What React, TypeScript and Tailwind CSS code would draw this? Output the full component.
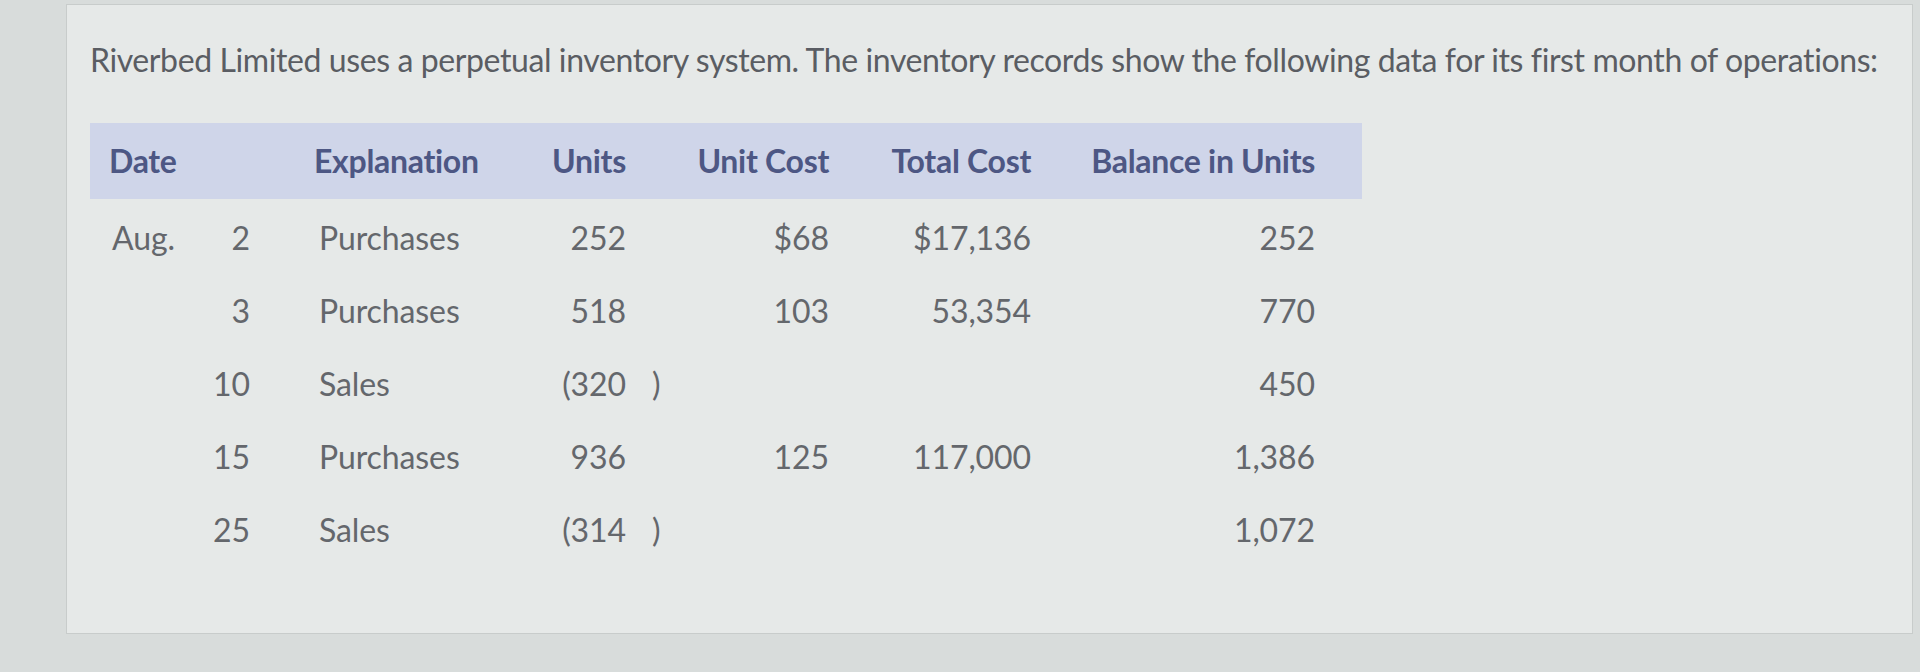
const rows = [
  { month: 'Aug.', day: '2', exp: 'Purchases', units: '252', neg: false, unitCost: '$68', total: '$17,136', balance: '252' },
  { month: '', day: '3', exp: 'Purchases', units: '518', neg: false, unitCost: '103', total: '53,354', balance: '770' },
  { month: '', day: '10', exp: 'Sales', units: '(320', neg: true, unitCost: '', total: '', balance: '450' },
  { month: '', day: '15', exp: 'Purchases', units: '936', neg: false, unitCost: '125', total: '117,000', balance: '1,386' },
  { month: '', day: '25', exp: 'Sales', units: '(314', neg: true, unitCost: '', total: '', balance: '1,072' },
]

const cols = 'grid grid-cols-[205px_215px_97px_203px_202px_284px]'

export default function App() {
  return (
    <div className="h-[672px] w-[1920px] overflow-hidden bg-[#d8dcdb] pl-[66px] pr-[7px] pt-[4px] font-['Lato',sans-serif]">
      <div className="h-[630px] border border-[#c8cccb] bg-[#e6e9e8] pl-[23px] pt-[40px]">
        {/* question text */}
        <p className="text-[32px] leading-[30px] tracking-[-0.4px] text-[#5a5d63]">
          Riverbed Limited uses a perpetual inventory system. The inventory records show the following data for its first month of operations:
        </p>

        {/* table */}
        <div className="mt-[48px] w-[1272px]">
          <div className={`${cols} h-[76px] items-center bg-[#cfd5e9] pl-[19px] text-[32px] font-bold tracking-[-0.3px] text-[#4d5784]`}>
            <div>Date</div>
            <div>Explanation</div>
            <div className="text-right">Units</div>
            <div className="text-right">Unit Cost</div>
            <div className="text-right">Total Cost</div>
            <div className="text-right">Balance in Units</div>
          </div>

          <div className="pt-[2px] pl-[19px] text-[32px] tracking-[-0.1px] text-[#64676c]">
            {rows.map((r) => (
              <div key={r.day} className={`${cols} h-[73px] items-center`}>
                <div className="flex">
                  <span className="ml-[3px] w-[88px]">{r.month}</span>
                  <span className="w-[50px] text-right">{r.day}</span>
                </div>
                <div className="pl-[5px]">{r.exp}</div>
                <div className="text-right">
                  <span className="relative">
                    {r.units}
                    {r.neg && <span className="absolute left-full ml-[26px]">)</span>}
                  </span>
                </div>
                <div className="text-right">{r.unitCost}</div>
                <div className="text-right">{r.total}</div>
                <div className="text-right">{r.balance}</div>
              </div>
            ))}
          </div>
        </div>
      </div>
    </div>
  )
}
